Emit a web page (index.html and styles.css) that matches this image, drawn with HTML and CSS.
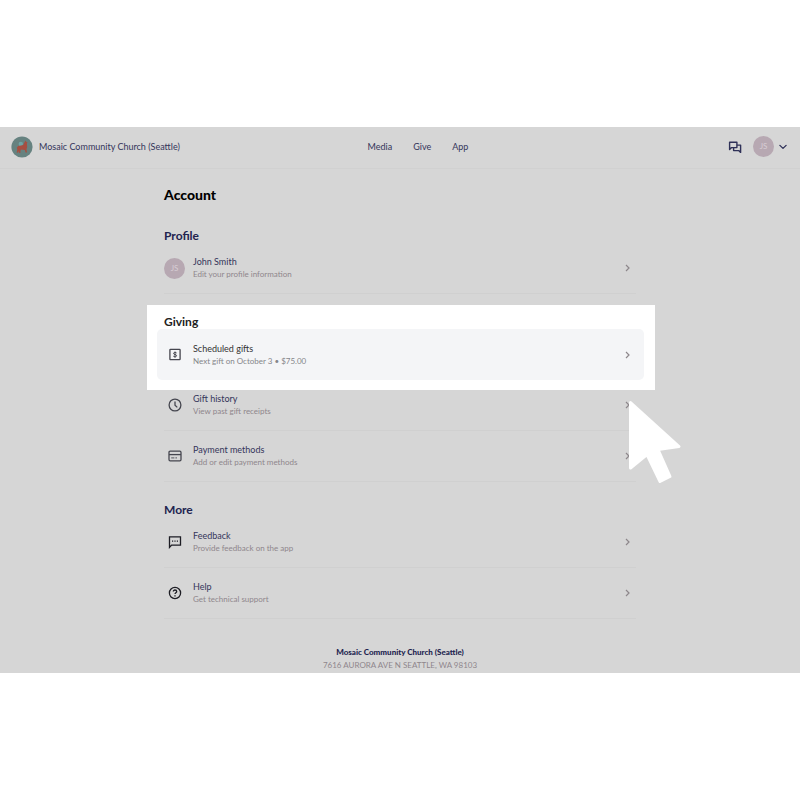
FILE: index.html
```
<!DOCTYPE html>
<html lang="en">
<head>
    <meta charset="UTF-8">
    <meta name="viewport" content="width=device-width, initial-scale=1.0">
    <title>Account</title>
    <link rel="stylesheet" href="styles.css">
</head>
<body>
    <div class="page">
        <header class="topbar">
            <a class="brand" href="#">
                <svg class="logo" viewBox="0 0 22 22" aria-hidden="true">
                    <circle cx="11" cy="11" r="10.6" fill="#668280"/>
                    <circle cx="9.8" cy="8" r="2.2" fill="#6fa5a6"/>
                    <path d="M14.4 4.6l.8 1.2 1.3.5-.6 1.3.3 3.4-.7 2.2.5 3.3-1.4.1-.8-2.6-3.4-.4-1 1.1.1 2.1-1.5.1-.3-2.2-.6 1.9-1.4.1.6-3.4-.5-1.6 1.3-1.6 3-.5 2.1-.6 1-2z" fill="#a64f41"/>
                </svg>
                <span>Mosaic Community Church (Seattle)</span>
            </a>
            <nav class="nav">
                <a href="#">Media</a>
                <a href="#">Give</a>
                <a href="#">App</a>
            </nav>
            <div class="tools">
                <button class="icon-btn" aria-label="Messages">
                    <svg width="14" height="14" viewBox="0 0 14 14" fill="none" stroke="#2f3158" stroke-width="1.4" stroke-linejoin="round">
                        <path d="M1.6 9.6V2.2h7.3v5.4H3.6z"/>
                        <path d="M9 5.1h3.6v7.3l-1.9-1.8H5.6V7.7"/>
                    </svg>
                </button>
                <button class="user-btn" aria-label="Account menu">
                    <span class="avatar">JS</span>
                    <svg width="8" height="6" viewBox="0 0 8 6" fill="none" stroke="#2f3158" stroke-width="1.3" stroke-linecap="round" stroke-linejoin="round">
                        <path d="M.9 1.4L4 4.4l3.1-3"/>
                    </svg>
                </button>
            </div>
        </header>

        <main class="content">
            <h1>Account</h1>

            <section>
                <h2>Profile</h2>
                <a class="row" href="#">
                    <span class="avatar">JS</span>
                    <span class="text"><span class="title">John Smith</span><span class="sub">Edit your profile information</span></span>
                    <svg class="chevron" viewBox="0 0 5 8"><path d="M1 1l3 3-3 3"/></svg>
                </a>
            </section>

            <section>
                <div class="spotlight">
                    <h2>Giving</h2>
                    <a class="row active" href="#">
                        <span class="icon">
                            <svg viewBox="0 0 14 14"><rect x="1.9" y="1.4" width="10.2" height="10.2" rx=".6"/><path d="M8.6 5C8.3 4.500 7.700 4.400 7 4.400c-.9 0-1.500.4-1.500 1 0 1.500 3.100.7 3.100 2.300 0 .7-.7 1.100-1.600 1.100-.8 0-1.400-.2-1.700-.7M7 3.600v6" stroke-width="1"/></svg>
                        </span>
                        <span class="text"><span class="title">Scheduled gifts</span><span class="sub">Next gift on October 3 • $75.00</span></span>
                        <svg class="chevron" viewBox="0 0 5 8"><path d="M1 1l3 3-3 3"/></svg>
                    </a>
                    <svg class="pointer" viewBox="0 0 54 84" aria-hidden="true">
                        <path d="M2.5 2.5L51 46.5 30 49.5 42 76.5 32 81.5 19 54.5 2.5 68z"/>
                    </svg>
                </div>
                <a class="row" href="#">
                    <span class="icon">
                        <svg viewBox="0 0 14 14"><circle cx="7" cy="7" r="5.9"/><path d="M7 3.5v3.7l2.3 2.2"/></svg>
                    </span>
                    <span class="text"><span class="title">Gift history</span><span class="sub">View past gift receipts</span></span>
                    <svg class="chevron" viewBox="0 0 5 8"><path d="M1 1l3 3-3 3"/></svg>
                </a>
                <a class="row" href="#">
                    <span class="icon">
                        <svg viewBox="0 0 14 14"><rect x="1" y="2.2" width="12" height="9.6" rx="1.2"/><path d="M1 5.6h12"/><path d="M3.2 8.9h3.2M7.4 8.9H9" stroke-width=".9"/></svg>
                    </span>
                    <span class="text"><span class="title">Payment methods</span><span class="sub">Add or edit payment methods</span></span>
                    <svg class="chevron" viewBox="0 0 5 8"><path d="M1 1l3 3-3 3"/></svg>
                </a>
            </section>

            <section>
                <h2>More</h2>
                <a class="row" href="#">
                    <span class="icon dark">
                        <svg viewBox="0 0 14 14"><path d="M1.5 12.4V1.9h11v8.2H3.6z"/><path d="M4 6.1h1.2M6.4 6.1h1.2M8.8 6.1H10"/></svg>
                    </span>
                    <span class="text"><span class="title">Feedback</span><span class="sub">Provide feedback on the app</span></span>
                    <svg class="chevron" viewBox="0 0 5 8"><path d="M1 1l3 3-3 3"/></svg>
                </a>
                <a class="row" href="#">
                    <span class="icon dark">
                        <svg viewBox="0 0 14 14"><circle cx="7" cy="7" r="5.6"/><path d="M5.3 5.6C5.3 4.6 6 4 7 4s1.700.6 1.700 1.500c0 1.200-1.700 1.300-1.700 2.600M7 9.300v1.200"/></svg>
                    </span>
                    <span class="text"><span class="title">Help</span><span class="sub">Get technical support</span></span>
                    <svg class="chevron" viewBox="0 0 5 8"><path d="M1 1l3 3-3 3"/></svg>
                </a>
            </section>
        </main>

        <footer class="footer">
            <strong>Mosaic Community Church (Seattle)</strong>
            <span>7616 AURORA AVE N SEATTLE, WA 98103</span>
        </footer>
    </div>
</body>
</html>
```

FILE: styles.css
```
* { box-sizing: border-box; }
body { font-family: "Lato", sans-serif; font-size: 9px; line-height: 12px; background: #fff; color: #34355a; margin: 0; }
a { color: inherit; text-decoration: none; }
button { font: inherit; color: inherit; background: none; border: none; padding: 0; cursor: pointer; }
svg { display: block; flex: none; }

.page { margin: 127px 0; background: #d6d6d6; }

.topbar { display: grid; grid-template-columns: 1fr auto 1fr; align-items: center; height: 42px; padding: 0 13px 2px 11px; border-bottom: 1px solid #d1d1d1; }
.brand { display: flex; align-items: center; gap: 6px; }
.logo { width: 22px; height: 22px; }
.nav { display: flex; gap: 21px; padding-left: 38px; }
.tools { display: flex; justify-content: flex-end; align-items: center; gap: 11px; }
.user-btn { display: flex; align-items: center; gap: 5px; }
.avatar { flex: none; width: 21px; height: 21px; border-radius: 50%; background: #b7a8b2; color: #d8ced5; font-size: 8px; line-height: 21px; text-align: center; }

.content { max-width: 472px; margin: 0 auto; padding-top: 18px; }
h1 { margin: 0 0 26px; font-size: 14px; line-height: 16px; font-weight: 900; color: #000; }
h2 { margin: 0; font-size: 12px; line-height: 14px; font-weight: 700; color: #22244f; }
section { margin-bottom: 21px; }

.row { display: flex; align-items: center; gap: 8px; height: 51px; padding-right: 6px; border-bottom: 1px solid #d0d0d0; }
.text { flex: 1; display: flex; flex-direction: column; }
.title { font-size: 9px; line-height: 12px; }
.sub { font-size: 8px; line-height: 12px; color: #8f868c; }
.icon { width: 21px; display: flex; justify-content: center; }
.icon svg { width: 14px; height: 14px; fill: none; stroke: #45464f; stroke-width: 1.3; }
.icon.dark svg { stroke: #1d1d24; }
.chevron { width: 5px; height: 8px; fill: none; stroke: #8d878b; stroke-width: 1.2; }

.spotlight { position: relative; margin: -10px -19px -10px -17px; padding: 10px 19px 10px 17px; background: #fff; color: #333; }
.spotlight h2 { color: #222; }
.row.active { margin: 0 -8px 0 -7px; padding: 0 14px 0 7px; border: none; border-radius: 5px; background: #f4f5f7; }
.active .sub { color: #85868a; }
.pointer { position: absolute; z-index: 1; top: 95px; right: -27px; width: 54px; height: 84px; fill: #fff; stroke: #fff; stroke-width: 3; stroke-linejoin: round; }

.footer { display: flex; flex-direction: column; align-items: center; padding: 6px 0 1px; line-height: 13px; font-size: 8px; color: #8f868c; }
.footer strong { color: #22244f; font-weight: 900; }
```
